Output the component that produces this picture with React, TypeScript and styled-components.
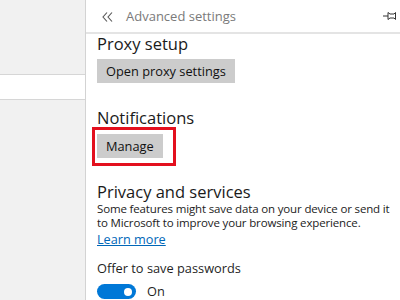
import React from 'react'
import styled, { createGlobalStyle } from 'styled-components'

const GlobalStyle = createGlobalStyle`
  html, body {
    margin: 0;
    padding: 0;
    width: 400px;
    height: 300px;
    overflow: hidden;
    background: #fff;
  }
  body {
    font-family: 'Open Sans', 'Noto Sans', sans-serif;
    color: #1f1f1f;
  }
`

const Page = styled.div`
  display: flex;
  width: 400px;
  height: 300px;
`

const LeftPane = styled.div`
  width: 86px;
  flex: none;
  background: #f1f1f1;
  border-right: 1px solid #d3d3d3;
  padding-top: 74px;
  box-sizing: border-box;
`

const AddressStrip = styled.div`
  height: 24px;
  background: #fff;
  border-top: 1px solid #d6d6d6;
  border-bottom: 1px solid #d6d6d6;
`

const Flyout = styled.div`
  flex: 1;
  display: flex;
  flex-direction: column;
  background: #fff;
  min-width: 0;
`

const Header = styled.div`
  height: 32px;
  flex: none;
  display: flex;
  align-items: center;
  border-bottom: 2px solid #e4e4e4;
  padding-left: 16px;
  color: #7a7a7a;
  font-size: 13px;
`

const Back = styled.svg`
  width: 11px;
  height: 10px;
  margin-right: 13px;
  margin-top: 1px;
`

const Title = styled.span`
  flex: 1;
`

const Pin = styled.svg`
  width: 16px;
  height: 10px;
  margin-right: 1px;
`

const Content = styled.div`
  padding-left: 11px;
  display: flex;
  flex-direction: column;
  align-items: flex-start;
`

const Heading = styled.div<{ $top: number }>`
  font-size: 16.5px;
  line-height: 20px;
  margin-top: ${p => p.$top}px;
  color: #1a1a1a;
  white-space: nowrap;
`

const Button = styled.button`
  font-family: inherit;
  font-size: 12.8px;
  color: #111;
  background: #cccccc;
  border: none;
  height: 24px;
  padding: 0 9px;
  margin-top: 5px;
  cursor: pointer;
`

const Highlight = styled.div`
  margin-left: -5px;
  margin-top: -1px;
  border: 3px solid #e3101e;
  padding: 4px 10px 5px 2px;
  & > button {
    margin-top: 0;
  }
`

const Description = styled.div`
  font-size: 11.5px;
  letter-spacing: -0.15px;
  line-height: 14px;
  color: #222;
  margin-top: 0;
  white-space: nowrap;
`

const Link = styled.a`
  font-size: 12.7px;
  color: #0067b8;
  text-decoration: underline;
  line-height: 16px;
  margin-top: 1px;
`

const Label = styled.div`
  font-size: 12.8px;
  margin-top: 13px;
  line-height: 17px;
`

const ToggleRow = styled.div`
  display: flex;
  align-items: center;
  gap: 11px;
  margin-top: 7px;
  font-size: 12.8px;
  line-height: 15px;
`

const Toggle = styled.div`
  width: 39px;
  height: 15px;
  border-radius: 8px;
  background: #0078d7;
  position: relative;
  &::after {
    content: '';
    position: absolute;
    right: 4px;
    top: 3.5px;
    width: 8px;
    height: 8px;
    border-radius: 50%;
    background: #fff;
  }
`

export default function App() {
  return (
    <Page>
      <GlobalStyle />
      <LeftPane>
        <AddressStrip />
      </LeftPane>
      <Flyout>
        <Header>
          <Back viewBox="0 0 11 10">
            <path d="M5 0.5 L1 5 L5 9.5 M10 0.5 L6 5 L10 9.5" fill="none" stroke="#555" strokeWidth="1.1" />
          </Back>
          <Title>Advanced settings</Title>
          <Pin viewBox="0 0 16 10">
            <line x1="0" y1="5" x2="5" y2="5" stroke="#333" strokeWidth="1" />
            <path d="M5 1.5 L7 3 L11 3 L12.5 1.5 L12.5 8.5 L11 7 L7 7 L5 8.5 Z" fill="none" stroke="#333" strokeWidth="1" />
          </Pin>
        </Header>
        <Content>
          <Heading $top={0}>Proxy setup</Heading>
          <Button>Open proxy settings</Button>
          <Heading $top={25}>Notifications</Heading>
          <Highlight>
            <Button>Manage</Button>
          </Highlight>
          <Heading $top={16}>Privacy and services</Heading>
          <Description>
            Some features might save data on your device or send it
            <br />
            to Microsoft to improve your browsing experience.
          </Description>
          <Link>Learn more</Link>
          <Label>Offer to save passwords</Label>
          <ToggleRow>
            <Toggle />
            <span>On</span>
          </ToggleRow>
        </Content>
      </Flyout>
    </Page>
  )
}
